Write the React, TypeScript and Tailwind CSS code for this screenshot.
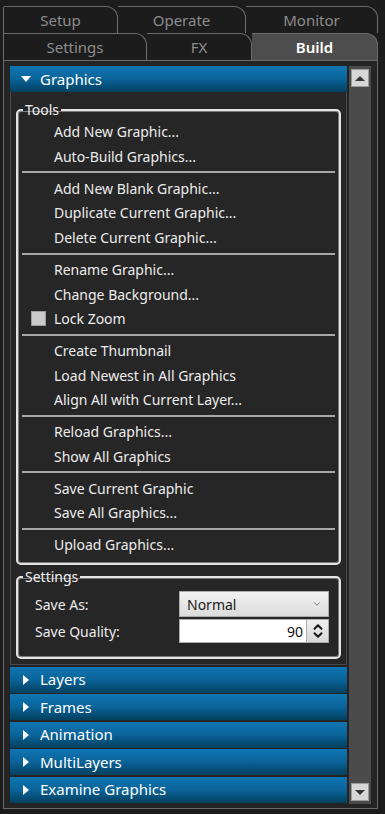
import { ChevronDown, ChevronUp } from "lucide-react";

const toolGroups = [
  ["Add New Graphic...", "Auto-Build Graphics..."],
  ["Add New Blank Graphic...", "Duplicate Current Graphic...", "Delete Current Graphic..."],
  ["Rename Graphic...", "Change Background...", "#Lock Zoom"],
  ["Create Thumbnail", "Load Newest in All Graphics", "Align All with Current Layer..."],
  ["Reload Graphics...", "Show All Graphics"],
  ["Save Current Graphic", "Save All Graphics..."],
  ["Upload Graphics..."],
];

const sections = ["Layers", "Frames", "Animation", "MultiLayers", "Examine Graphics"];

function Tab({ label, width, active }: { label: string; width: string; active?: boolean }) {
  return (
    <div
      className={`${width} h-full flex items-center justify-center border-t border-r border-[#6b6b6b] rounded-tr-[12px] text-[15px] ${
        active ? "bg-[#4d4d4d] text-white font-semibold" : "bg-[#1c1c1c] text-[#8c8c8c]"
      }`}
    >
      {label}
    </div>
  );
}

function Header({ label, open }: { label: string; open?: boolean }) {
  return (
    <div className="h-[26px] flex items-center bg-gradient-to-b from-[#1076b2] via-[#0a6399] to-[#03405f] text-white text-[15px] shrink-0">
      <div className="w-[30px] flex justify-center">
        {open ? (
          <div className="w-0 h-0 border-l-[5px] border-r-[5px] border-t-[6px] border-l-transparent border-r-transparent border-t-white ml-[2px]" />
        ) : (
          <div className="w-0 h-0 border-t-[5px] border-b-[5px] border-l-[6px] border-t-transparent border-b-transparent border-l-white ml-[2px]" />
        )}
      </div>
      <span>{label}</span>
    </div>
  );
}

function ScrollBtn({ up }: { up?: boolean }) {
  return (
    <div className="w-[18px] h-[18px] bg-[#d6d6d6] border border-[#9a9a9a] flex items-center justify-center">
      {up ? (
        <div className="w-0 h-0 border-l-[5px] border-r-[5px] border-b-[5px] border-l-transparent border-r-transparent border-b-[#333]" />
      ) : (
        <div className="w-0 h-0 border-l-[5px] border-r-[5px] border-t-[5px] border-l-transparent border-r-transparent border-t-[#333]" />
      )}
    </div>
  );
}

export default function App() {
  return (
    <div className="w-[385px] h-[814px] bg-[#1c1c1c] pt-[6px] px-[3px] font-['Noto_Sans',sans-serif] overflow-hidden">
      {/* Tab rows */}
      <div className="flex h-[27px] border-l border-[#6b6b6b] rounded-tl-[2px]">
        <Tab label="Setup" width="w-[114px]" />
        <Tab label="Operate" width="w-[128px]" />
        <Tab label="Monitor" width="w-[132px]" />
      </div>
      <div className="flex h-[27px] border-l border-[#6b6b6b]">
        <Tab label="Settings" width="w-[143px]" />
        <Tab label="FX" width="w-[105px]" />
        <Tab label="Build" width="w-[126px]" active />
      </div>

      {/* Main panel */}
      <div className="h-[749px] w-[375px] border border-[#6b6b6b] bg-[#242424] flex pl-[6px] pt-[5px] pb-[4px] pr-[3px] gap-[2px]">
        <div className="w-[338px] flex flex-col gap-[1.5px]">
          <div className="flex flex-col">
            <Header label="Graphics" open />
            <div className="h-[573px] bg-[#262626] border-x border-b border-[#4a4a4a] px-[5px] pt-[9px]">
              {/* Tools */}
              <fieldset className="border-2 border-[#e4e4e4] rounded-[5px] h-[464px] shadow-[inset_0_0_0_1px_#7a7a7a]">
                <legend className="ml-[5px] px-[2px] text-[14px] leading-[18px] text-[#f0f0f0]">Tools</legend>
                <div className="flex flex-col pt-[0.5px]">
                  {toolGroups.map((group, gi) => (
                    <div key={gi} className="flex flex-col">
                      {gi > 0 && <div className="h-[2px] bg-[#a8a8a8] mx-[4px] my-[2.7px]" />}
                      {group.map((item) =>
                        item.startsWith("#") ? (
                          <div key={item} className="h-[24.6px] flex items-center pl-[13px] text-[14px] text-[#ececec]">
                            <div className="w-[15px] h-[15px] bg-[#c9c9c9] border border-[#9c9c9c] mr-[8px]" />
                            {item.slice(1)}
                          </div>
                        ) : (
                          <div key={item} className="h-[24.6px] flex items-center pl-[36px] text-[14px] text-[#ececec]">
                            {item}
                          </div>
                        )
                      )}
                    </div>
                  ))}
                </div>
              </fieldset>

              {/* Settings */}
              <fieldset className="mt-[3px] border-2 border-[#e4e4e4] rounded-[5px] h-[91px] shadow-[inset_0_0_0_1px_#7a7a7a]">
                <legend className="ml-[5px] px-[2px] text-[14px] leading-[18px] text-[#f0f0f0]">Settings</legend>
                <div className="flex flex-col pl-[17px] pt-[5px] gap-[2px] text-[14px] text-[#ececec]">
                  <div className="flex items-center h-[26px]">
                    <span className="w-[144px]">Save As:</span>
                    <div className="w-[150px] h-[26px] bg-gradient-to-b from-[#f2f2f2] to-[#dcdcdc] border border-[#acacac] flex items-center justify-between pl-[7px] pr-[6px] text-[#1a1a1a]">
                      <span>Normal</span>
                      <ChevronDown size={10} strokeWidth={2} className="text-[#666]" />
                    </div>
                  </div>
                  <div className="flex items-center h-[24px]">
                    <span className="w-[144px]">Save Quality:</span>
                    <div className="w-[150px] h-[24px] flex border border-[#acacac] bg-white">
                      <div className="flex-1 flex items-center justify-end pr-[3px] text-[#111]">90</div>
                      <div className="w-[22px] border-l border-[#acacac] bg-gradient-to-b from-[#f0f0f0] to-[#d8d8d8] flex flex-col items-center justify-center">
                        <ChevronUp size={14} strokeWidth={3.5} className="text-[#1a1a1a] -mb-[3px]" />
                        <ChevronDown size={14} strokeWidth={3.5} className="text-[#1a1a1a] -mt-[3px]" />
                      </div>
                    </div>
                  </div>
                </div>
              </fieldset>
            </div>
          </div>
          {sections.map((s) => (
            <Header key={s} label={s} />
          ))}
        </div>

        {/* Scrollbar */}
        <div className="w-[22px] bg-[#4b4b4b] flex flex-col justify-between items-center py-[3px] mr-[3px]">
          <ScrollBtn up />
          <ScrollBtn />
        </div>
      </div>
    </div>
  );
}
